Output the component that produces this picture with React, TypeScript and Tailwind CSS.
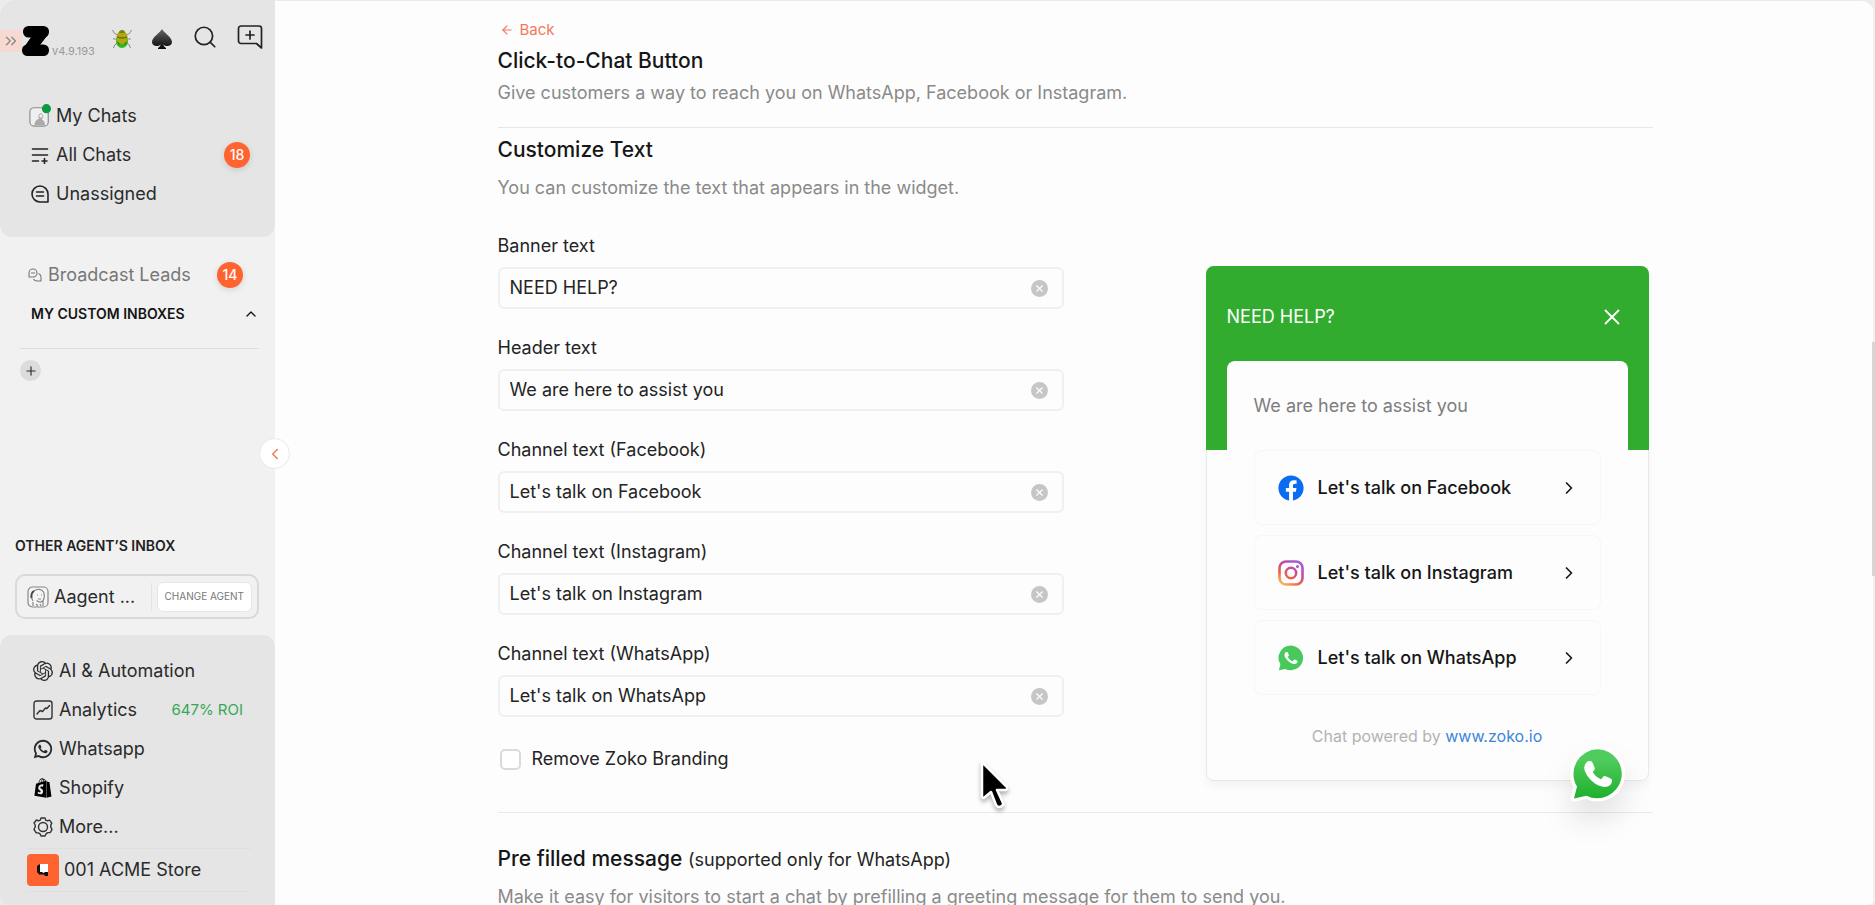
"use client";

import { useState } from "react";
import type { ReactNode } from "react";
import { ArrowLeft, ChevronLeft, ChevronRight, ChevronUp, ChevronsRight, Plus, Search, X } from "lucide-react";
import { FaFacebook, FaShopify } from "react-icons/fa";
import { RiWhatsappLine } from "react-icons/ri";
import { SiOpenai } from "react-icons/si";

const BUBBLE = "M12 .5A11.4 11.4 0 0 0 2.2 17.8L.8 23.4l5.8-1.3A11.4 11.4 0 1 0 12 .5z";
const HANDSET =
  "M17.472 14.382c-.297-.149-1.758-.867-2.03-.967-.273-.099-.471-.148-.67.15-.197.297-.767.966-.94 1.164-.173.199-.347.223-.644.075-.297-.15-1.255-.463-2.39-1.475-.883-.788-1.48-1.761-1.653-2.059-.173-.297-.018-.458.13-.606.134-.133.298-.347.446-.52.149-.174.198-.298.298-.497.099-.198.05-.371-.025-.52-.075-.149-.669-1.612-.916-2.207-.242-.579-.487-.5-.669-.51-.173-.008-.371-.01-.57-.01-.198 0-.52.074-.792.372-.272.297-1.04 1.016-1.04 2.479 0 1.462 1.065 2.875 1.213 3.074.149.198 2.096 3.2 5.077 4.487.709.306 1.262.489 1.694.625.712.227 1.36.195 1.871.118.571-.085 1.758-.719 2.006-1.413.248-.694.248-1.289.173-1.413-.074-.124-.272-.198-.57-.347z";

function ZokoLogo() {
  return (
    <svg viewBox="0 0 28 30" className="h-[30px] w-7" aria-hidden="true">
      <rect x="1" y="0" width="26" height="11.500" rx="5.500" />
      <rect x="0" y="18.500" width="27" height="11.500" rx="5.500" />
      <path d="M11 9 L26 8 L16 21 L2 22 Z" stroke="#000" strokeWidth="1" strokeLinejoin="round" />
    </svg>
  );
}

function BugIcon() {
  return (
    <svg viewBox="0 0 20 20" className="size-5" aria-hidden="true">
      <g fill="none" stroke="#8a8d80" strokeWidth="1">
        <path d="M6 6 2.500 4.500.5 1M14 6l3.500-1.500 2-3.500M5 10H1M15 10h4M6 14l-3 1.500-1.500 3.500M14 14l3 1.500 1.500 3.500" />
      </g>
      <ellipse cx="10" cy="12" rx="6" ry="7" fill="#2fbb1c" />
      <path d="M4.500 9c0-4 2-7 5.500-7s5.500 3 5.500 7c0 3-2 6-5.500 6s-5.500-3-5.500-6z" fill="#b0a80c" />
      <path d="M7 4c0-2 1.200-3 3-3s3 1 3 3z" fill="#7d7d14" />
      <path d="M5 8c3 1.300 7 1.300 10 0M5.500 13l2 2.500M14.500 13l-2 2.500" stroke="#4c5a12" strokeWidth="1" fill="none" />
    </svg>
  );
}

function SpadeIcon() {
  return (
    <svg viewBox="0 0 22 22" className="size-[22px]" aria-hidden="true">
      <defs>
        <linearGradient id="spade" x1="0" y1="0" x2="0" y2="1">
          <stop offset="0" stopColor="#666" />
          <stop offset="1" stopColor="#080808" />
        </linearGradient>
      </defs>
      <path
        fill="url(#spade)"
        d="M11 1c2 4 10 8 10 13 0 4-6 5.500-8.500 2.500.2 1.800 1 2.700 2.500 3.500v1H7v-1c1.500-.8 2.300-1.700 2.500-3.500C7 19.500 1 18 1 14 1 9 9 5 11 1z"
      />
    </svg>
  );
}

function NewChatIcon() {
  return (
    <svg viewBox="0 0 26 26" className="size-[26px]" fill="none" stroke="#222" strokeWidth="1.700" strokeLinejoin="round" strokeLinecap="round">
      <path d="M4 2h18a2.500 2.500 0 0 1 2.500 2.500V24l-5-4.500H4A2.500 2.500 0 0 1 1.500 17V4.500A2.500 2.500 0 0 1 4 2zM13 7v8M9 11h8" />
    </svg>
  );
}

function MyChatsIcon() {
  return (
    <svg viewBox="0 0 24 26" className="h-[26px] w-6">
      <rect x="1" y="4" width="20" height="20" rx="4.500" fill="#efefef" stroke="#8d8d8d" strokeWidth="1.300" />
      <path d="M6 23c0-4 2-6 5-7-1.500-2-1-5 1.500-6 2 0 3.500 2 3 4l-1.500 3c2.500 1 3.500 3 3.500 6z" fill="#aaa" />
      <circle cx="13" cy="13" r="1.800" fill="#eee" />
      <circle cx="19" cy="5" r="5" fill="#0c9a3f" />
    </svg>
  );
}

function AllChatsIcon() {
  return (
    <svg viewBox="0 0 18 18" className="size-[18px]" fill="none" stroke="#222" strokeWidth="1.600" strokeLinecap="round">
      <path d="M1.500 3h15M1.500 9h15M1.500 15h6M13.500 12.500v5M11 15h5" />
    </svg>
  );
}

function UnassignedIcon() {
  return (
    <svg viewBox="0 0 20 20" className="size-5" fill="none" stroke="#222" strokeWidth="1.600" strokeLinecap="round" strokeLinejoin="round">
      <path d="M18 18h-8a8 8 0 1 1 8-8zM6.500 8h7M6.500 12h7" />
    </svg>
  );
}

function LeadsIcon() {
  return (
    <svg viewBox="0 0 14 14" className="size-[14px]" fill="none" stroke="#777" strokeWidth="1.100" strokeLinejoin="round">
      <path d="M1 9V5a4 4 0 0 1 8 0v0a4 4 0 0 1-4 4zM10.500 5.500A4 4 0 0 1 13 9v4H9a4 4 0 0 1-3.500-2M3 5h4" />
    </svg>
  );
}

function AgentFace() {
  return (
    <svg viewBox="0 0 22 22" className="size-[22px] shrink-0" fill="none" stroke="#888" strokeWidth="1.200">
      <rect x="1" y="1" width="20" height="20" rx="4.500" fill="#f5f5f5" />
      <path d="M6 20v-4M6 15c-2-3-2-8 1-10 3-2.500 8-2 9.500 1 1.500 3 1 7-1 9-1.500 1.500-4 1-6-.5M16 15v5" />
      <path d="M7 5c-2.500 1.500-3 4-2.500 7" stroke="#444" strokeWidth="1.800" />
      <path d="M10 9h1M14 9h1M11 13h3M9 18l2 2M13 18l1 2" />
    </svg>
  );
}

function AnalyticsIcon() {
  return (
    <svg viewBox="0 0 20 20" className="size-5" fill="none" stroke="#333" strokeWidth="1.400" strokeLinecap="round" strokeLinejoin="round">
      <rect x="1" y="1" width="18" height="18" rx="2.500" />
      <path d="M4 14l3-3.500 2.500 1 3-3.500 1.500.5 2.500-3" />
    </svg>
  );
}

function CogIcon() {
  return (
    <svg viewBox="0 0 20 20" className="size-5" fill="none" stroke="#333" strokeWidth="1.400" strokeLinejoin="round">
      <path d="M8 1h4l.8 2.200 1.500.7 2.200-.8 2.300 3-1 2v2l1.200 2.200-1.700 3.200-2.500.1-1.500 1L12 19H8l-1-2.200-1.600-.9-2.400-.2L1 12.300 2.200 10V8L1 6l2.500-3 2.200.9 1.500-.7z" />
      <circle cx="10" cy="10" r="4.500" />
    </svg>
  );
}

function StoreLogo() {
  return (
    <span className="flex size-8 items-center justify-center rounded bg-[#ff6430]">
      <svg viewBox="0 0 14 14" className="size-[14px]">
        <path d="M1 3 4 1v8h8v4H9l-1-1.500H3L1 9z" fill="#111" />
        <path d="M4 1h8v8H9L7.500 10 6 9H4z" fill="#fff" />
      </svg>
    </span>
  );
}

function InstagramIcon() {
  return (
    <svg viewBox="0 0 26 26" className="size-[26px]" fill="none" stroke="url(#insta)">
      <defs>
        <linearGradient id="insta" gradientUnits="userSpaceOnUse" x1="5" y1="26" x2="20" y2="2">
          <stop offset="0" stopColor="#ffc163" />
          <stop offset="0.350" stopColor="#ee6044" />
          <stop offset="0.650" stopColor="#c74c9c" />
          <stop offset="1" stopColor="#a25bdc" />
        </linearGradient>
      </defs>
      <rect x="1.500" y="1.500" width="23" height="23" rx="6.500" strokeWidth="2.600" />
      <circle cx="13" cy="13" r="5.200" strokeWidth="2.500" />
      <circle cx="19.500" cy="6.500" r="1.500" fill="#a856c4" stroke="none" />
    </svg>
  );
}

function WhatsAppIcon({ className }: { className: string }) {
  return (
    <svg viewBox="0 0 24 24" className={className}>
      <path d={BUBBLE} fill="#48c95b" />
      <path d={HANDSET} fill="#fff" />
    </svg>
  );
}

function WhatsAppFab() {
  return (
    <svg viewBox="-2 -2 28 28" className="size-[60px] drop-shadow-[0_18px_14px_rgba(0,0,0,0.1)]">
      <defs>
        <linearGradient id="fab" x1="0" y1="0" x2="0" y2="1">
          <stop offset="0.200" stopColor="#50cb5d" />
          <stop offset="1" stopColor="#1eb02d" />
        </linearGradient>
      </defs>
      <path d={BUBBLE} fill="#fff" stroke="#fff" strokeWidth="3" strokeLinejoin="round" />
      <path d={BUBBLE} fill="url(#fab)" />
      <path d={HANDSET} fill="#fff" stroke="#fff" strokeWidth="0.900" />
    </svg>
  );
}

function NavItem({ icon, label, children }: { icon: ReactNode; label: string; children?: ReactNode }) {
  return (
    <li className="flex h-[39px] items-center">
      <a href="#" className="flex items-center gap-1">
        <span className="flex w-[22px] justify-center">{icon}</span>
        {label}
      </a>
      {children}
    </li>
  );
}

function Badge({ children }: { children: ReactNode }) {
  return (
    <span className="flex size-[26px] items-center justify-center rounded-full bg-[#ff6430] text-sm font-medium text-white shadow-[0_2px_6px_rgba(0,0,0,0.12)]">
      {children}
    </span>
  );
}

function Sidebar() {
  return (
    <aside className="relative flex w-[275px] shrink-0 flex-col bg-[#f1f1f1] text-lg text-[#2b2b2b]">
      <div className="rounded-b-xl bg-[#e5e5e5] pb-6">
        <div className="flex h-24 items-start pt-[26px]">
          <button aria-label="Expand" className="mt-1 flex h-[22px] w-[22px] items-center justify-center bg-[#f6d9d1] text-[#888]">
            <ChevronsRight size={18} strokeWidth={1.7} />
          </button>
          <ZokoLogo />
          <span className="mt-[17px] ml-[2px] text-[11px] leading-4 text-[#999]">v4.9.193</span>
          <div className="mr-3 ml-auto flex items-center gap-[19px] pt-[2px]">
            <BugIcon />
            <SpadeIcon />
            <button aria-label="Search" className="-mt-1">
              <Search size={26} strokeWidth={1.6} color="#222" />
            </button>
            <button aria-label="New chat" className="-mt-1">
              <NewChatIcon />
            </button>
          </div>
        </div>
        <ul className="pr-[25px] pl-[29px] [&_a]:gap-[5px]">
          <NavItem icon={<MyChatsIcon />} label="My Chats" />
          <NavItem icon={<AllChatsIcon />} label="All Chats">
            <span className="ml-auto">
              <Badge>18</Badge>
            </span>
          </NavItem>
          <NavItem icon={<UnassignedIcon />} label="Unassigned" />
        </ul>
      </div>

      <div className="flex items-center justify-between pt-6 pr-8 pl-7 text-[#777]">
        <a href="#" className="flex items-center gap-[6px]">
          <LeadsIcon />
          Broadcast Leads
        </a>
        <Badge>14</Badge>
      </div>
      <button className="mt-[13px] flex h-6 items-center justify-between pr-4 pl-[31px] text-sm font-semibold text-[#151515]">
        MY CUSTOM INBOXES
        <ChevronUp size={16} strokeWidth={2} />
      </button>
      <div className="mt-[22px] mr-4 ml-5 border-t border-[#dedede] pt-[11px]">
        <button aria-label="Add inbox" className="flex size-[21px] items-center justify-center rounded-full bg-[#dcdcdc]">
          <Plus size={14} strokeWidth={2} />
        </button>
      </div>

      <button
        aria-label="Collapse sidebar"
        className="absolute top-[438px] -right-[15px] z-10 flex size-[31px] items-center justify-center rounded-full border border-[#e8e8e8] bg-white text-[#f07a55]"
      >
        <ChevronLeft size={18} strokeWidth={2} />
      </button>

      <div className="mt-auto pr-4 pb-4 pl-[15px]">
        <h2 className="text-sm leading-6 font-semibold text-[#222]">OTHER AGENT’S INBOX</h2>
        <div className="mt-4 flex h-[45px] items-center rounded-[10px] border-2 border-[#d9d9d9] pr-[5px] pl-[10px]">
          <AgentFace />
          <span className="ml-[5px]">Aagent ...</span>
          <span className="ml-auto h-7 border-l border-[#e3e3e3]" />
          <button className="ml-[5px] h-[30px] rounded-md border border-[#e6e6e6] bg-white px-[7px] text-[10px] text-[#777]">CHANGE AGENT</button>
        </div>
      </div>

      <div className="rounded-t-xl bg-[#e5e5e5] pt-4">
        <ul className="pr-8 pb-[2px] pl-8 [&_a]:gap-[5px]">
          <NavItem icon={<SiOpenai size={20} />} label="AI & Automation" />
          <NavItem icon={<AnalyticsIcon />} label="Analytics">
            <span className="ml-auto text-[15px] text-[#35a853]">647% ROI</span>
          </NavItem>
          <NavItem icon={<RiWhatsappLine size={22} />} label="Whatsapp" />
          <NavItem icon={<FaShopify size={20} color="#000" />} label="Shopify" />
          <NavItem icon={<CogIcon />} label="More..." />
        </ul>
        <div className="mr-6 mb-[13px] ml-[27px] flex h-11 items-center border-y border-[#dfdfdf]">
          <a href="#" className="flex items-center gap-[5px]">
            <StoreLogo />
            001 ACME Store
          </a>
        </div>
      </div>
    </aside>
  );
}

interface TextFieldProps {
  id: string;
  label: string;
  value: string;
  onChange: (value: string) => void;
}

function TextField({ id, label, value, onChange }: TextFieldProps) {
  return (
    <div>
      <label htmlFor={id} className="block leading-6">
        {label}
      </label>
      <div className="mt-[9px] flex h-[42px] items-center rounded-md border-2 border-[#f0f0f0] pr-[14px] pl-[10px]">
        <input id={id} value={value} onChange={(e) => onChange(e.target.value)} className="min-w-0 flex-1 bg-transparent outline-none" />
        <button
          aria-label={`Clear ${label}`}
          onClick={() => onChange("")}
          className="flex size-[17px] items-center justify-center rounded-full bg-[#c6c6c6] text-white"
        >
          <X size={11} strokeWidth={2.5} />
        </button>
      </div>
    </div>
  );
}

function ChannelLink({ icon, text }: { icon: ReactNode; text: string }) {
  return (
    <a href="#" className="flex h-[75px] items-center rounded-lg border border-[#f7f7f7] pr-[21px] pl-[23px] font-medium text-[#161616]">
      {icon}
      <span className="ml-[14px]">{text}</span>
      <ChevronRight size={20} strokeWidth={2} className="ml-auto" />
    </a>
  );
}

export default function App() {
  const [banner, setBanner] = useState("NEED HELP?");
  const [header, setHeader] = useState("We are here to assist you");
  const [facebook, setFacebook] = useState("Let's talk on Facebook");
  const [instagram, setInstagram] = useState("Let's talk on Instagram");
  const [whatsapp, setWhatsapp] = useState("Let's talk on WhatsApp");
  const [hideBranding, setHideBranding] = useState(false);

  return (
    <div className="h-screen bg-[#ececec] font-['Inter',sans-serif]">
      <div className="relative flex h-full overflow-hidden rounded-2xl rounded-b-lg">
        <Sidebar />

        <main className="min-w-0 flex-1 overflow-hidden border-t border-[#ececec] bg-[#fdfdfd] text-lg text-[#242424]">
          <div className="mx-auto max-w-[1155px] pt-[19px]">
            <a href="#" className="ml-[2px] flex w-fit items-center gap-[6px] text-[15px] leading-5 text-[#f2795a]">
              <ArrowLeft size={14} strokeWidth={2} />
              Back
            </a>
            <h1 className="mt-[7px] text-[21px] leading-7 font-medium text-[#161616]">Click-to-Chat Button</h1>
            <p className="mt-[6px] leading-6 text-[#8a8a8a]">Give customers a way to reach you on WhatsApp, Facebook or Instagram.</p>

            <section className="mt-[22px] border-t border-[#e6e6e6] pt-2">
              <h2 className="text-[21px] leading-7 font-medium text-[#161616]">Customize Text</h2>
              <p className="mt-3 leading-6 text-[#8a8a8a]">You can customize the text that appears in the widget.</p>

              <div className="flex items-start justify-between pr-1">
                <div className="mt-[34px] w-[566px]">
                  <div className="flex flex-col gap-[27px]">
                    <TextField id="banner" label="Banner text" value={banner} onChange={setBanner} />
                    <TextField id="header" label="Header text" value={header} onChange={setHeader} />
                    <TextField id="facebook" label="Channel text (Facebook)" value={facebook} onChange={setFacebook} />
                    <TextField id="instagram" label="Channel text (Instagram)" value={instagram} onChange={setInstagram} />
                    <TextField id="whatsapp" label="Channel text (WhatsApp)" value={whatsapp} onChange={setWhatsapp} />
                  </div>
                  <label className="mt-[30px] flex items-center gap-[11px] pl-[2px] leading-6">
                    <input
                      type="checkbox"
                      checked={hideBranding}
                      onChange={(e) => setHideBranding(e.target.checked)}
                      className="size-[21px] appearance-none rounded-[5px] border-2 border-[#dadada] bg-white checked:bg-[#ff6430]"
                    />
                    Remove Zoko Branding
                  </label>
                </div>

                {/* Live preview of the widget */}
                <div className="relative mt-[66px] w-[443px] rounded-lg border border-[#e8e8e8] bg-[#fdfdfd] pb-8 shadow-[0_6px_8px_rgba(0,0,0,0.04)]">
                  <div className="-mx-px -mt-px rounded-t-lg bg-[#31ac2f] px-[21px]">
                    <div className="flex h-[95px] items-center justify-between pt-[6px] pr-[3px] text-white">
                      {banner}
                      <button aria-label="Close">
                        <X size={26} strokeWidth={1.7} />
                      </button>
                    </div>
                    <div className="flex h-[89px] items-center rounded-t-lg bg-[#fdfdfd] px-[27px] text-[#7d7d7d]">{header}</div>
                  </div>
                  <div className="mx-[47px] flex flex-col gap-[10px]">
                    <ChannelLink icon={<FaFacebook size={26} color="#0a6cf0" />} text={facebook} />
                    <ChannelLink icon={<InstagramIcon />} text={instagram} />
                    <ChannelLink icon={<WhatsAppIcon className="size-[26px]" />} text={whatsapp} />
                  </div>
                  {!hideBranding && (
                    <p className="mt-[29px] text-center text-base leading-6 text-[#b3b3b3]">
                      Chat powered by{" "}
                      <a href="#" className="text-[#3b86dc]">
                        www.zoko.io
                      </a>
                    </p>
                  )}
                  <button aria-label="Open WhatsApp chat" className="absolute right-5 -bottom-6">
                    <WhatsAppFab />
                  </button>
                </div>
              </div>
            </section>

            <section className="mt-[31px] border-t border-[#e9e9e9] pt-8">
              <h2 className="text-[21px] leading-7 font-medium text-[#161616]">
                Pre filled message <span className="text-lg font-normal text-[#242424]">(supported only for WhatsApp)</span>
              </h2>
              <p className="mt-[11px] leading-6 text-[#8a8a8a]">Make it easy for visitors to start a chat by prefilling a greeting message for them to send you.</p>
            </section>
          </div>
        </main>

        {/* Scroll track and thumb */}
        <div className="absolute inset-y-0 right-0 w-[2px] bg-[#f0f0f0]" />
        <div className="absolute top-[342px] right-0 h-[234px] w-[3px] bg-[#d6d6d6]" />

        {/* Pointer */}
        <svg viewBox="0 0 32 52" className="absolute top-[758px] left-[979px] h-[54px] w-8 drop-shadow-[0_3px_2px_rgba(0,0,0,0.3)]">
          <path d="M3 3v35q1 2 3 0l6-5 5 13q3 4 7 0v-2l-6-13h9q2-1 1-3z" fill="#000" stroke="#fff" strokeWidth="2.500" strokeLinejoin="round" />
        </svg>
      </div>
    </div>
  );
}
